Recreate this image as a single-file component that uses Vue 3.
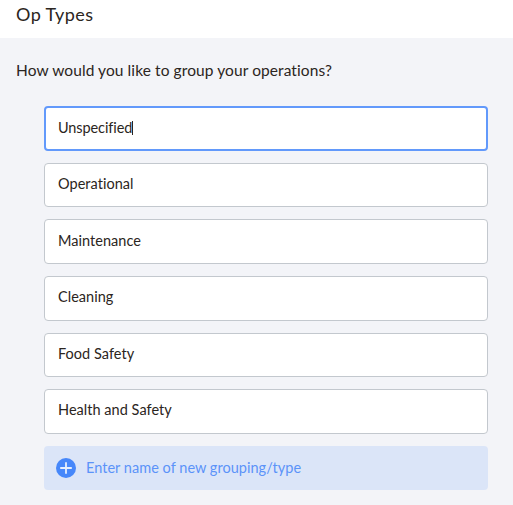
<script setup>
import { ref } from 'vue'

const groups = ref([
  'Unspecified',
  'Operational',
  'Maintenance',
  'Cleaning',
  'Food Safety',
  'Health and Safety',
])
const active = ref(0)
</script>

<template>
  <main class="page">
    <header class="header">
      <h1 class="title">Op Types</h1>
    </header>
    <section class="panel">
      <h2 class="question">How would you like to group your operations?</h2>
      <div class="list">
        <div
          v-for="(name, i) in groups"
          :key="name"
          class="field"
          :class="{ focused: i === active }"
          @click="active = i"
        >
          <span class="label">{{ name }}</span>
          <span v-if="i === active" class="caret"></span>
        </div>
        <div class="field add">
          <svg class="plus" viewBox="0 0 20 20" width="20" height="20">
            <circle cx="10" cy="10" r="10" fill="#4687fa" />
            <path d="M10 4.2v11.6M4.2 10h11.6" stroke="#e6effd" stroke-width="1.8" />
          </svg>
          <span class="prompt">Enter name of new grouping/type</span>
        </div>
      </div>
    </section>
  </main>
</template>

<style>
body {
  margin: 0;
  background: #f3f4f8;
}
</style>

<style scoped>
.page {
  min-height: 505px;
  display: flex;
  flex-direction: column;
  font-family: Lato, "Liberation Sans", sans-serif;
  color: #2b2521;
}
.header {
  box-sizing: border-box;
  height: 38px;
  padding: 2px 16px 0;
  background: #fff;
}
.title {
  margin: 0;
  font-size: 18px;
  line-height: 24px;
  font-weight: 400;
  letter-spacing: 0.4px;
}
.panel {
  flex: 1;
  padding: 20px 25px 14px 16px;
  background: #f3f4f8;
}
.question {
  margin: 0;
  font-size: 15.5px;
  line-height: 24px;
  font-weight: 400;
  letter-spacing: 0.09px;
}
.list {
  display: flex;
  flex-direction: column;
  gap: 12px;
  padding: 24.2px 0 0 28px;
}
.field {
  box-sizing: border-box;
  height: 44.6px;
  display: flex;
  align-items: center;
  padding: 0 13px 2px;
  border: 1px solid #c3c8ce;
  border-radius: 4px;
  background: #fff;
  font-size: 14.5px;
  line-height: 20px;
  letter-spacing: 0.03px;
  white-space: nowrap;
}
.focused {
  padding: 0 12px 1px;
  border: 2px solid #6299fb;
}
.focused .label {
  letter-spacing: -0.1px;
}
.caret {
  width: 1px;
  height: 14px;
  background: #2b2521;
}
.add {
  gap: 10px;
  padding: 0 12px;
  border: 0;
  background: #dbe5f8;
  color: #5b93f9;
}
.prompt {
  padding-bottom: 1px;
}
</style>
